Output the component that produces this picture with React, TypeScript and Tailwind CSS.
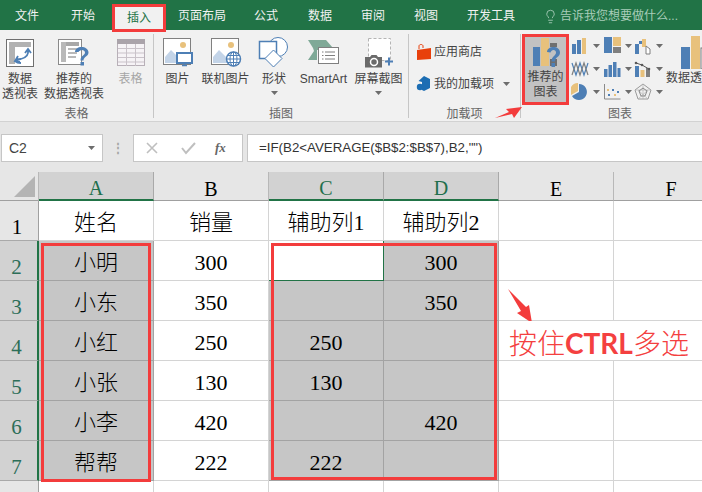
import { Lightbulb } from 'lucide-react'
import type { ReactNode } from 'react'

const BLUE = '#4e7fb5'
const GOLD = '#e8c17c'
const GRAY = '#7f7f7f'

const Caret = ({ className = '' }: { className?: string }) => (
  <svg width="7" height="4" viewBox="0 0 7 4" className={className}>
    <path d="M0 0h7L3.5 4z" fill="#6d6d6d" />
  </svg>
)

const Icon = ({ w = 32, h = 32, children }: { w?: number; h?: number; children: ReactNode }) => (
  <svg width={w} height={h} viewBox={`0 0 ${w} ${h}`} className="shrink-0">
    {children}
  </svg>
)

const PivotIcon = () => (
  <Icon>
    <rect x="2.5" y="3.5" width="27" height="27" fill="#fff" stroke="#6f6f6f" />
    <rect x="5" y="6" width="22" height="5" fill="#b2b2b2" />
    <rect x="5" y="6" width="6" height="22" fill="#b2b2b2" />
    <path d="M24 14c1 6-3 8-7 9M21 17l3-4 3 4M17 27c-3 0-5-1-6-2 1-2 3-2 6-2M14 20l-3 5 5 1" fill="none" stroke={BLUE} strokeWidth="1.8" />
  </Icon>
)

const RecommendedPivotIcon = () => (
  <Icon w={36}>
    <rect x="2.5" y="3.5" width="23" height="25" fill="#fff" stroke="#8a8a8a" />
    <rect x="5" y="6" width="18" height="4" fill="#a8a8a8" />
    <rect x="5" y="6" width="5" height="20" fill="#b9b9b9" />
    <path d="M12 13h11M12 17h9M12 21h8" stroke="#b9b9b9" strokeWidth="2" />
    <path d="M19 16c0-3 3-5 6.500-5s7 2 7 5.500c0 4-5 4-5 8h-3c0-5 4.500-5 4.500-8 0-1.500-1.500-2.500-3-2.500s-3 1-3.500 2z" fill={BLUE} />
    <rect x="24.500" y="26" width="3.500" height="3.500" fill={BLUE} />
  </Icon>
)

const TableIcon = () => (
  <Icon>
    <rect x="2.500" y="3.500" width="27" height="26" fill="#f6f3f6" stroke="#b8b0b8" />
    <rect x="2" y="3" width="28" height="5" fill="#aaa3aa" />
    <path d="M11.500 8v22M20.500 8v22M3 12.500h26M3 17h26M3 21.500h26M3 26h26" stroke="#c9c2c9" />
  </Icon>
)

const PictureBase = () => (
  <>
    <rect x="1.500" y="2.500" width="27" height="26" fill="#fff" stroke="#808080" />
    <circle cx="21" cy="9" r="3" fill={GOLD} />
    <path d="M3 27V21l6-7 6 6 2 2v5z" fill="#c3d4e8" />
  </>
)

const PictureIcon = () => (
  <Icon>
    <PictureBase />
    <rect x="15" y="17" width="15" height="10" fill="#fff" stroke={BLUE} strokeWidth="2" />
    <path d="M20 29.500h5M22.500 27v2" stroke={BLUE} strokeWidth="1.500" />
  </Icon>
)

const OnlinePictureIcon = () => (
  <Icon>
    <PictureBase />
    <circle cx="23.500" cy="23" r="7" fill="#fff" stroke={BLUE} strokeWidth="1.500" />
    <path d="M16.500 23h14M17.500 19.500h12M17.500 26.500h12M23.500 16v14" stroke={BLUE} />
    <ellipse cx="23.500" cy="23" rx="3.500" ry="7" fill="none" stroke={BLUE} />
  </Icon>
)

const ShapesIcon = () => (
  <Icon>
    <circle cx="20" cy="11" r="9.500" fill="#fff" stroke={BLUE} />
    <rect x="1.500" y="5.500" width="17" height="17" fill="#fff" stroke={BLUE} strokeWidth="1.500" />
    <path d="M15.500 14l8.500 8.500-8.500 8.500-8.500-8.500z" fill="#fff" stroke={BLUE} />
  </Icon>
)

const SmartArtIcon = () => (
  <Icon w={34}>
    <path d="M1 4h18l7 8-4 2H10v10H1l6-9-1-3z" fill="#7fa997" />
    <rect x="11.500" y="11.500" width="20" height="16" fill="#fff" stroke="#7f7f7f" />
    <path d="M15 16h1.500M15 19.500h1.500M15 23h1.500M18 16h10M18 19.500h10M18 23h10" stroke="#7f7f7f" />
  </Icon>
)

const ScreenshotIcon = () => (
  <Icon w={30}>
    <rect x="4.500" y="2.500" width="22" height="22" fill="#fff" stroke="#b4b4b4" strokeDasharray="3 2" />
    <path d="M1 21h5l1.500-2h5l1.500 2h4v10.500H1z" fill="#6a6a6a" />
    <circle cx="10" cy="26" r="3.500" fill="#6a6a6a" stroke="#fff" strokeWidth="1.500" />
    <path d="M21 25.500h8M25 21.500v8" stroke={BLUE} strokeWidth="2" />
  </Icon>
)

const StoreIcon = () => (
  <Icon w={16} h={18}>
    <path d="M1 7l14-2v11l-14 1z" fill="#e8400c" />
    <path d="M3 6V3c0-2 4-2 4 0v2" fill="none" stroke="#e8400c" />
  </Icon>
)

const AddinIcon = () => (
  <Icon w={16} h={18}>
    <path d="M8 1l6 3v9l-6 3-2-1V7L2.500 6z" fill="#1c6db3" />
    <circle cx="4" cy="12" r="3.200" fill="#1c6db3" />
  </Icon>
)

const RecommendedChartIcon = () => (
  <Icon w={30} h={31}>
    <rect x="2" y="10" width="7" height="19" fill={BLUE} />
    <rect x="10" y="1" width="8" height="28" fill={GOLD} />
    <rect x="19" y="6" width="7" height="4" fill="#6f6f6f" />
    <rect x="19" y="22" width="7" height="7" fill="#6f6f6f" />
    <path d="M16 15c0-3 3-5 6.500-5s6.500 2 6.500 5.500c0 4.500-5 4.500-5 9h-3.500c0-5.500 4.500-5.500 4.500-9 0-1.500-1-2.500-2.500-2.500s-2.500 1-3 2.500z" fill={BLUE} />
    <rect x="20.500" y="26" width="3.500" height="4" fill={BLUE} />
  </Icon>
)

const miniCharts: ReactNode[] = [
  <>
    <rect x="1" y="7" width="4" height="10" fill={BLUE} />
    <rect x="6" y="3" width="4" height="14" fill={BLUE} />
    <rect x="11" y="1" width="4" height="16" fill={GOLD} />
  </>,
  <>
    <rect x="1" y="0" width="8" height="16" fill={BLUE} />
    <rect x="10" y="0" width="8" height="9" fill={GOLD} />
    <rect x="10" y="10" width="8" height="6" fill={GRAY} />
  </>,
  <>
    <rect x="1" y="7" width="4" height="10" fill={BLUE} />
    <rect x="5" y="4" width="3" height="3" fill={BLUE} />
    <rect x="8" y="2" width="4" height="8" fill={GOLD} />
    <path d="M12 9l4 3v5h-4z" fill="#fff" stroke={GRAY} />
  </>,
  <>
    <path d="M1 3l4 12 4-12 4 12 4-12" fill="none" stroke={BLUE} strokeWidth="1.200" />
    <path d="M1 15l4-12 4 12 4-12 4 12" fill="none" stroke={GRAY} strokeWidth="1.200" />
  </>,
  <>
    <rect x="1" y="9" width="3.500" height="8" fill={BLUE} />
    <rect x="5.500" y="5" width="3.500" height="12" fill={BLUE} />
    <rect x="10" y="2" width="3.500" height="15" fill={BLUE} />
    <rect x="14.500" y="8" width="3" height="9" fill={BLUE} />
  </>,
  <>
    <rect x="1" y="6" width="4" height="11" fill={BLUE} />
    <rect x="6.500" y="10" width="4" height="7" fill={GOLD} />
    <rect x="12" y="8" width="4" height="9" fill={GRAY} />
    <path d="M2 3l6 2 7 4" fill="none" stroke="#5a5a5a" />
    <circle cx="2" cy="3" r="1.300" fill="#5a5a5a" />
    <circle cx="8" cy="5" r="1.300" fill="#5a5a5a" />
    <circle cx="15" cy="9" r="1.300" fill="#5a5a5a" />
  </>,
  <>
    <path d="M8 1a8 8 0 1 1-7 12l7-4z" fill={BLUE} />
    <path d="M7 0v8L0 12a8 8 0 0 1 7-12z" fill={GOLD} />
  </>,
  <>
    <path d="M1.500 1v15h16" fill="none" stroke="#8a8a8a" />
    <path d="M5 11h2v2H5zM9 6h2v2H9zM14 8h2v2h-2z" fill={BLUE} />
    <path d="M4 6h2v2H4zM11 11h2v2h-2z" fill={GOLD} />
  </>,
  <>
    <path d="M9 1l8 6-3 9H4L1 7z" fill="none" stroke="#9a9a9a" />
    <path d="M9 1v15M1 7l16 0M4 16L14 7M14 16L4 7" stroke="#b5b5b5" strokeWidth=".7" />
    <path d="M9 5l4 3-2 5H7L5 8z" fill="none" stroke="#8a8a8a" />
  </>
]

interface RibbonButtonProps {
  icon: ReactNode
  lines: string[]
  width: string
  muted?: boolean
  caret?: boolean
}

const RibbonButton = ({ icon, lines, width, muted, caret }: RibbonButtonProps) => (
  <div className={`flex shrink-0 flex-col items-center pt-[5px] ${width}`}>
    <div className="flex h-[33px] items-center justify-center">{icon}</div>
    <div className={`mt-[4px] text-center text-[12px] leading-[15px] whitespace-nowrap ${muted ? 'text-[#a6a6a6]' : 'text-[#444]'}`}>
      {lines.map((line) => (
        <div key={line}>{line}</div>
      ))}
    </div>
    {caret && <Caret className="mt-[4px]" />}
  </div>
)

const Group = ({ label, width, children }: { label: string; width: string; children: ReactNode }) => (
  <div className={`flex shrink-0 flex-col ${width}`}>
    <div className="flex h-[78px]">{children}</div>
    <div className="text-center text-[12px] leading-[14px] text-[#666]">{label}</div>
  </div>
)

const Sep = () => <div className="mt-[4px] h-[84px] w-px shrink-0 bg-[#c6c6c6]" />

const tabs = [
  { name: '文件', width: 'w-[54px]' },
  { name: '开始', width: 'w-[58px]' },
  { name: '插入', width: 'w-[54px]' },
  { name: '页面布局', width: 'w-[72px]' },
  { name: '公式', width: 'w-[56px]' },
  { name: '数据', width: 'w-[52px]' },
  { name: '审阅', width: 'w-[54px]' },
  { name: '视图', width: 'w-[52px]' },
  { name: '开发工具', width: 'w-[78px]' }
]

const rows = [
  { n: 2, a: '小明', b: '300', c: '', d: '300' },
  { n: 3, a: '小东', b: '350', c: '', d: '350' },
  { n: 4, a: '小红', b: '250', c: '250', d: '' },
  { n: 5, a: '小张', b: '130', c: '130', d: '' },
  { n: 6, a: '小李', b: '420', c: '', d: '420' },
  { n: 7, a: '帮帮', b: '222', c: '222', d: '' }
]

const ColHead = ({ label, active }: { label: string; active?: boolean }) => (
  <div
    className={`flex items-center justify-center border-r pt-[5px] text-[20px] ${
      active
        ? 'border-r-[#a9a9a9] border-b-[2px] border-b-[#217346] bg-[#d2d2d2] text-[#1f6f4c]'
        : 'border-r-[#b8b8b8] border-b-[1px] border-b-[#a0a0a0] bg-[#e6e6e6] text-black'
    }`}
  >
    {label}
  </div>
)

const RowHead = ({ n, active }: { n: number; active?: boolean }) => (
  <div
    className={`flex items-end justify-center border-b pr-[4px] text-[21px] leading-[26px] ${
      active
        ? 'border-r-[2px] border-r-[#217346] border-b-[#a9a9a9] bg-[#d2d2d2] text-[#2c6e58]'
        : 'border-r border-r-[#a0a0a0] border-b-[#a9a9a9] bg-[#e6e6e6] text-black'
    }`}
  >
    {n}
  </div>
)

const Cell = ({ children, selected, className = '' }: { children?: ReactNode; selected?: boolean; className?: string }) => (
  <div
    className={`flex items-center justify-center border-r border-b pt-[3px] text-[22px] font-light text-black ${
      selected ? 'border-[#a3a3a3] bg-[#c6c6c6]' : 'border-[#d4d4d4] bg-white'
    } ${className}`}
  >
    {children}
  </div>
)

export default function App() {
  return (
    <div className="relative h-[492px] w-[702px] overflow-hidden bg-[#e6e6e6] font-['Liberation_Sans','Noto_Sans_CJK_SC',sans-serif]">
      {/* tabs */}
      <div className="flex h-[30px] bg-[#217346] text-[12px] text-[#f2f2f2]">
        {tabs.map((tab) =>
          tab.name === '插入' ? (
            <div
              key={tab.name}
              className={`z-10 mt-[4px] flex h-[28px] items-center justify-center border-[3px] border-[#f33c3c] bg-[#f1f1f1] text-[#217346] ${tab.width}`}
            >
              {tab.name}
            </div>
          ) : (
            <div key={tab.name} className={`flex items-center justify-center pt-[2px] ${tab.width}`}>
              {tab.name}
            </div>
          )
        )}
        <div className="ml-[13px] flex items-center gap-[2px] pt-[2px] text-[#a8cdb9]">
          <Lightbulb size={15} strokeWidth={1.4} />
          <span>告诉我您想要做什么...</span>
        </div>
      </div>

      {/* ribbon */}
      <div className="flex h-[92px] overflow-hidden border-b border-[#d2d2d2] bg-[#f1f1f1]">
        <Group label="表格" width="w-[153px]">
          <RibbonButton width="w-[40px]" icon={<PivotIcon />} lines={['数据', '透视表']} />
          <RibbonButton width="w-[68px]" icon={<RecommendedPivotIcon />} lines={['推荐的', '数据透视表']} />
          <RibbonButton width="w-[45px]" icon={<TableIcon />} lines={['表格']} muted />
        </Group>
        <Sep />
        <Group label="插图" width="w-[254px]">
          <RibbonButton width="w-[47px]" icon={<PictureIcon />} lines={['图片']} />
          <RibbonButton width="w-[49px]" icon={<OnlinePictureIcon />} lines={['联机图片']} />
          <RibbonButton width="w-[48px]" icon={<ShapesIcon />} lines={['形状']} caret />
          <RibbonButton width="w-[51px]" icon={<SmartArtIcon />} lines={['SmartArt']} />
          <RibbonButton width="w-[59px]" icon={<ScreenshotIcon />} lines={['屏幕截图']} caret />
        </Group>
        <Sep />
        <Group label="加载项" width="w-[111px]">
          <div className="flex flex-col gap-[14px] pt-[13px] pl-[7px] text-[12px] text-[#444]">
            <div className="flex h-[18px] items-center gap-[2px]">
              <StoreIcon />
              <span className="whitespace-nowrap">应用商店</span>
            </div>
            <div className="flex h-[18px] items-center gap-[2px]">
              <AddinIcon />
              <span className="whitespace-nowrap">我的加载项</span>
              <Caret className="ml-[7px]" />
            </div>
          </div>
        </Group>
        <Sep />
        <div className="flex shrink-0 flex-col">
          <div className="flex h-[78px]">
            <div className="mt-[4px] ml-[1px] flex h-[71px] w-[47px] shrink-0 flex-col items-center border-[3px] border-[#f33c3c] bg-[#c2c2c2] text-[12px] leading-[15px] text-[#444]">
              <RecommendedChartIcon />
              <div className="mt-[2px] text-center whitespace-nowrap">
                <div>推荐的</div>
                <div>图表</div>
              </div>
            </div>
            <div className="mt-[5px] grid h-[68px] w-[96px] shrink-0 grid-cols-3 pl-[1px]">
              {miniCharts.map((chart, i) => (
                <div key={i} className="flex items-center gap-[3px] pl-[1px]">
                  <Icon w={19} h={18}>
                    {chart}
                  </Icon>
                  <Caret />
                </div>
              ))}
            </div>
            <div className="mt-[5px] ml-[1px] flex w-[60px] shrink-0 flex-col items-center">
              <Icon w={36} h={34}>
                <rect x="3" y="12" width="9" height="22" fill={BLUE} />
                <rect x="13" y="1" width="9" height="33" fill={GOLD} />
                <rect x="23" y="13" width="13" height="21" fill="#fff" stroke="#777" />
              </Icon>
              <div className="mt-[2px] text-[12px] leading-[15px] whitespace-nowrap text-[#444]">数据透视图</div>
            </div>
          </div>
          <div className="w-[198px] text-center text-[12px] leading-[14px] text-[#666]">图表</div>
        </div>
      </div>

      {/* formula bar */}
      <div className="mt-[12px] flex h-[28px] items-stretch text-[14px] text-[#444]">
        <div className="ml-[1px] flex w-[102px] items-center justify-between border border-[#c6c6c6] bg-white px-[7px]">
          <span>C2</span>
          <Caret />
        </div>
        <div className="flex w-[30px] items-center justify-center text-[#a6a6a6]">
          <span className="text-[12px] leading-none font-bold">⋮</span>
        </div>
        <div className="flex w-[110px] items-center border border-[#c6c6c6] bg-white">
          <svg width="106" height="26" viewBox="0 0 106 26">
            <path d="M13 8l10 10M23 8L13 18" stroke="#bfbfbf" strokeWidth="1.600" fill="none" />
            <path d="M48 13l4 5 9-10" stroke="#bfbfbf" strokeWidth="2" fill="none" />
          </svg>
          <span className="-ml-[25px] font-['Liberation_Serif',serif] text-[13px] font-bold text-[#666] italic">fx</span>
        </div>
        <div className="ml-[4px] flex flex-1 items-center border-y border-l border-[#c6c6c6] bg-white pl-[11px] text-[13.3px] text-[#333]">
          {'=IF(B2<AVERAGE($B$2:$B$7),B2,"")'}
        </div>
      </div>

      {/* sheet */}
      <div className="mt-[10px] grid grid-cols-[39px_115px_115px_115px_115px_115px_115px] grid-rows-[29px_repeat(7,40px)_40px] font-['Liberation_Serif','Noto_Sans_CJK_SC',serif]">
        <div className="flex items-end justify-end border-r border-b border-r-[#b8b8b8] border-b-[#a0a0a0] bg-[#e6e6e6] pr-[3px] pb-[3px]">
          <svg width="21" height="21" viewBox="0 0 21 21">
            <path d="M21 0v21H0z" fill="#b4b4b4" />
          </svg>
        </div>
        <ColHead label="A" active />
        <ColHead label="B" />
        <ColHead label="C" active />
        <ColHead label="D" active />
        <ColHead label="E" />
        <ColHead label="F" />

        <RowHead n={1} />
        <Cell>姓名</Cell>
        <Cell>销量</Cell>
        <Cell>辅助列1</Cell>
        <Cell>辅助列2</Cell>
        <Cell />
        <Cell />

        {rows.map((row) => (
          <div key={row.n} className="contents">
            <RowHead n={row.n} active />
            <Cell selected>{row.a}</Cell>
            <Cell>{row.b}</Cell>
            {row.n === 2 ? <Cell className="!border-[#217346]" /> : <Cell selected>{row.c}</Cell>}
            <Cell selected>{row.d}</Cell>
            {row.n === 4 ? (
              <Cell className="relative z-10 justify-start !border-r-0 pt-[6px] pl-[10px]">
                <span className="text-[28px] whitespace-nowrap text-[#f44040]">
                  按住<span className="font-['Lato',sans-serif] font-bold">CTRL</span>多选
                </span>
              </Cell>
            ) : (
              <Cell />
            )}
            <Cell className={row.n === 4 ? 'border-l-0' : ''} />
          </div>
        ))}

        <RowHead n={8} />
        <Cell />
        <Cell />
        <Cell />
        <Cell />
        <Cell />
        <Cell />
      </div>

      {/* annotations */}
      <div className="absolute top-[243px] left-[41px] h-[239px] w-[110px] border-[3px] border-[#f33c3c]" />
      <div className="absolute top-[243px] left-[271px] h-[237px] w-[226px] border-[3px] border-[#f33c3c]" />
      <svg className="absolute top-[105px] left-[494px]" width="30" height="16" viewBox="0 0 30 16">
        <path d="M1 13L15 7 12 4 28 2 20 13 18 9z" fill="#f33c3c" />
      </svg>
      <svg className="absolute top-[288px] left-[506px]" width="30" height="36" viewBox="0 0 30 36">
        <path d="M2 1L20 19 23 17 26 35 11 25 15 23z" fill="#f33c3c" />
      </svg>
    </div>
  )
}
